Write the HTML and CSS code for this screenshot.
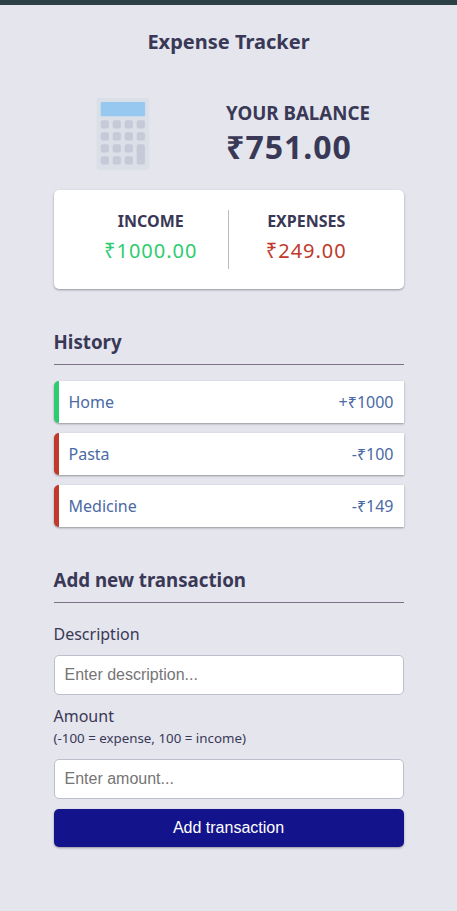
FILE: index.html
```html
<!DOCTYPE html>
<html lang="en">
<head>
  <meta charset="utf-8">
  <meta name="viewport" content="width=device-width, initial-scale=1">
  <title>Expense Tracker</title>
  <link rel="stylesheet" href="styles.css">
</head>
<body>
  <h1 class="title">Expense Tracker</h1>
  <main class="container">
    <section class="balance">
      <svg class="calculator" viewBox="0 0 72 72" aria-hidden="true">
        <rect x="9.7" width="52.6" height="72" rx="2.5" fill="#dadfe8"/>
        <rect x="13.7" y="4" width="44.4" height="14.3" rx="1" fill="#97c8ef"/>
        <g fill="#c5cad8">
          <rect x="13.7" y="22.3" width="8.2" height="8.2" rx="2"/>
          <rect x="25.7" y="22.3" width="8.2" height="8.2" rx="2"/>
          <rect x="37.7" y="22.3" width="8.2" height="8.2" rx="2"/>
          <rect x="49.7" y="22.3" width="8.2" height="8.2" rx="2"/>
          <rect x="13.7" y="34.3" width="8.2" height="8.2" rx="2"/>
          <rect x="25.7" y="34.3" width="8.2" height="8.2" rx="2"/>
          <rect x="37.7" y="34.3" width="8.2" height="8.2" rx="2"/>
          <rect x="49.7" y="34.3" width="8.2" height="8.2" rx="2"/>
          <rect x="13.7" y="46.3" width="8.2" height="8.2" rx="2"/>
          <rect x="25.7" y="46.3" width="8.2" height="8.2" rx="2"/>
          <rect x="37.7" y="46.3" width="8.2" height="8.2" rx="2"/>
          <rect x="49.7" y="46.3" width="8.2" height="20.2" rx="2"/>
          <rect x="13.7" y="58.3" width="8.2" height="8.2" rx="2"/>
          <rect x="25.7" y="58.3" width="8.2" height="8.2" rx="2"/>
          <rect x="37.7" y="58.3" width="8.2" height="8.2" rx="2"/>
        </g>
      </svg>
      <div>
        <h3 class="balance-label">YOUR BALANCE</h3>
        <p class="balance-amount">₹751.00</p>
      </div>
    </section>

    <section class="summary">
      <div class="summary-item">
        <h4 class="summary-label">INCOME</h4>
        <p class="money plus">₹1000.00</p>
      </div>
      <div class="summary-item">
        <h4 class="summary-label">EXPENSES</h4>
        <p class="money minus">₹249.00</p>
      </div>
    </section>

    <section class="section">
      <h3 class="heading">History</h3>
      <ul class="list">
        <li class="entry income"><span>Home</span><span>+₹1000</span></li>
        <li class="entry expense"><span>Pasta</span><span>-₹100</span></li>
        <li class="entry expense"><span>Medicine</span><span>-₹149</span></li>
      </ul>
    </section>

    <section class="section">
      <h3 class="heading">Add new transaction</h3>
      <form class="form">
        <label class="label" for="description">Description</label>
        <input class="field" id="description" type="text" placeholder="Enter description...">
        <label class="label" for="amount">Amount<small class="hint">(-100 = expense, 100 = income)</small></label>
        <input class="field" id="amount" type="number" placeholder="Enter amount...">
        <button class="submit" type="submit">Add transaction</button>
      </form>
    </section>
  </main>
</body>
</html>
```

FILE: styles.css
```css
* {
  box-sizing: border-box;
  margin: 0;
  padding: 0;
}

body {
  min-height: 100vh;
  padding: 24px 16px;
  border-top: 5px solid #2b4146;
  background: #e4e5ed;
  color: #393856;
  font: 16px/22px "Noto Sans", sans-serif;
}

.title {
  font-size: 20px;
  line-height: 25px;
  text-align: center;
}

.container {
  max-width: 350px;
  margin: 44px auto 0;
}

.balance {
  display: flex;
  justify-content: space-around;
  align-items: center;
}

.calculator {
  width: 72px;
  height: 72px;
}

.balance-label {
  line-height: 25px;
}

.balance-amount {
  font-size: 32px;
  font-weight: 700;
  line-height: 44px;
  letter-spacing: 1px;
}

.summary {
  display: flex;
  margin-top: 20px;
  padding: 20px;
  border-radius: 5px;
  background: #fff;
  box-shadow: 0 1px 3px rgba(0, 0, 0, 0.12), 0 1px 2px rgba(0, 0, 0, 0.24);
}

.summary-item {
  flex: 1;
  text-align: center;
}

.summary-item + .summary-item {
  border-left: 1px solid #bbbbc7;
}

.money {
  margin-top: 5px;
  padding-bottom: 4px;
  font-size: 20px;
  line-height: 28px;
  letter-spacing: 1px;
}

.plus {
  color: #2ecc71;
}

.minus {
  color: #c0392b;
}

.section {
  margin-top: 40px;
}

.heading {
  padding-bottom: 10px;
  border-bottom: 1px solid #7d7187;
  line-height: 25px;
}

.list {
  display: grid;
  gap: 10px;
  margin-top: 16px;
  list-style: none;
}

.entry {
  display: flex;
  justify-content: space-between;
  padding: 10px;
  border-left: 5px solid;
  border-radius: 5px 0 0 5px;
  background: #fff;
  box-shadow: 0 1px 3px rgba(0, 0, 0, 0.12), 0 1px 2px rgba(0, 0, 0, 0.24);
}

.entry span {
  color: #4a6aa5;
}

.income {
  border-left-color: #2ecc71;
}

.expense {
  border-left-color: #c0392b;
}

.form {
  display: grid;
  gap: 10px;
  margin-top: 20px;
}

.hint {
  display: block;
}

.field {
  width: 100%;
  height: 40px;
  padding: 0 10px;
  border: 1px solid #bdbecb;
  border-radius: 5px;
  background: #fff;
  font: 16px "Liberation Sans", Arial, sans-serif;
}

.field::placeholder {
  color: #757575;
}

.submit {
  height: 38px;
  border: 0;
  border-radius: 5px;
  background: #13148b;
  box-shadow: 0 1px 3px rgba(0, 0, 0, 0.12), 0 1px 2px rgba(0, 0, 0, 0.24);
  color: #fff;
  font: 16px "Liberation Sans", Arial, sans-serif;
  cursor: pointer;
}
```
